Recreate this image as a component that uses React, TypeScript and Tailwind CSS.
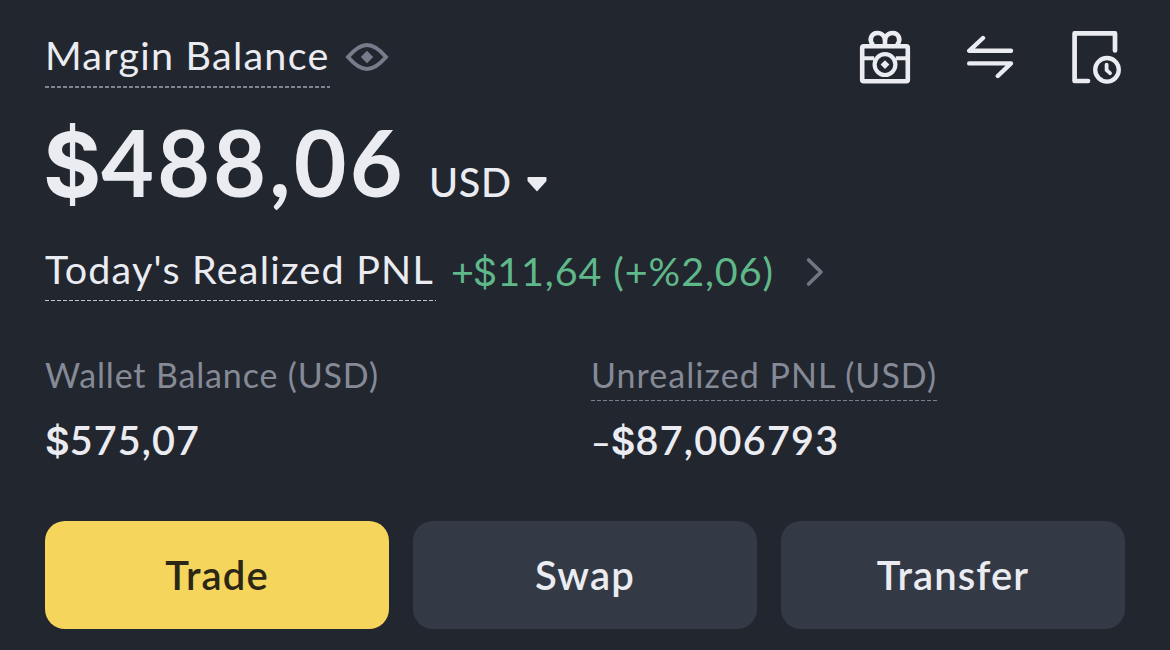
import type { ReactNode } from 'react';

function Dashed({ children, line }: { children: ReactNode; line: string }) {
  return (
    <div className="flex flex-col">
      {children}
      <div className={line} />
    </div>
  );
}

function Dollar({ className = '' }: { className?: string }) {
  return <span className={`font-['Inter',sans-serif] leading-none ${className}`}>$</span>;
}

function EyeIcon() {
  return (
    <svg width="44" height="30" viewBox="0 0 44 30" fill="none" className="text-[#757d8b]">
      <path d="M3 15C9 8 15 3 22 3s13 5 19 12c-6 7-12 12-19 12S9 22 3 15z" stroke="currentColor" strokeWidth="4" />
      <path d="M22 8.8l6.2 6.2-6.2 6.2-6.2-6.2z" fill="currentColor" />
    </svg>
  );
}

function GiftIcon() {
  return (
    <svg width="52" height="56" viewBox="0 0 52 56" fill="none" stroke="currentColor" strokeWidth="4.6">
      <path d="M14 16C9.6 11 12 4 18.4 4c4.6 0 7.6 3.4 7.6 8V16M38 16c4.4-5 2-12-4.4-12-4.6 0-7.6 3.4-7.6 8V16" />
      <rect x="3.2" y="17.2" width="45.6" height="35" rx="1.5" />
      <path d="M3.2 29.2h12M36.8 29.2h12" strokeWidth="4" />
      <circle cx="26" cy="35.6" r="10.4" strokeWidth="4.2" />
      <path d="M26 31.2l4.4 4.4-4.4 4.4-4.4-4.4z" fill="currentColor" stroke="none" />
    </svg>
  );
}

function SwapIcon() {
  return (
    <svg width="48" height="44" viewBox="0 0 48 44" fill="none" stroke="currentColor" strokeWidth="4.4" strokeLinecap="round" strokeLinejoin="round">
      <path d="M17 3L3.2 15.8H45M3.2 28.4H45L31.8 41" />
    </svg>
  );
}

function HistoryIcon() {
  return (
    <svg width="52" height="54" viewBox="0 0 52 54" fill="none" stroke="currentColor" strokeWidth="4.7" strokeLinecap="round" strokeLinejoin="round">
      <path d="M45 20.5V3.4H4.6V51H18" />
      <circle cx="37" cy="39.8" r="11.8" strokeWidth="4.3" />
      <path d="M36.6 34.6v5.6l3.4 3" strokeWidth="3.8" />
    </svg>
  );
}

export default function App() {
  return (
    <main className="h-[650px] w-[1170px] overflow-hidden bg-[#22262f] pl-[45px] pr-[45px] font-['Lato',sans-serif] text-[#ebecf1]">
      {/* Heading and shortcuts */}
      <header className="flex h-[108px] items-start justify-between pt-[29px]">
        <div className="flex">
          <div className="pt-1.5">
            <Dashed line="mt-[11px] h-[2px] w-[285px] bg-[repeating-linear-gradient(90deg,#80848e_0_4px,transparent_4px_6px)]">
              <h1 className="text-[39.5px] leading-10 whitespace-nowrap tracking-[1.25px]">Margin Balance</h1>
            </Dashed>
          </div>
          <div className="ml-[15px] pt-[13px]"><EyeIcon /></div>
        </div>
        <nav className="flex">
          <div className="mr-[55px]"><GiftIcon /></div>
          <div className="mr-[56px] pt-[6px]"><SwapIcon /></div>
          <div className="mr-[3px] pt-px"><HistoryIcon /></div>
        </nav>
      </header>

      {/* Total */}
      <section className="flex h-[130px] items-baseline leading-[108px]">
        <span className="w-[384px] text-[91px] font-bold whitespace-nowrap tracking-[3.2px]">
          <Dollar className="-ml-0.5 text-[89px] font-bold tracking-[0px]" />488,06
        </span>
        <span className="w-[98px] text-[39.5px] font-medium tracking-[0.7px]">USD</span>
        <svg width="20" height="15" viewBox="0 0 20 15" className="relative top-[-5px]" fill="currentColor">
          <path d="M1.5 0h17q1 0 1 1v3L10 14.5.5 4V1q0-1 1-1z" />
        </svg>
      </section>

      {/* Daily result */}
      <section className="flex h-[122px] items-start pt-[11px]">
        <Dashed line="mt-[11px] h-px w-[391px] bg-[repeating-linear-gradient(90deg,#c3c5ca_0_4px,transparent_4px_6px)]">
          <span className="w-[390px] text-[39.5px] leading-10 whitespace-nowrap tracking-[1.2px]">Today's Realized PNL</span>
        </Dashed>
        <span className="ml-[15px] w-[355px] pt-[2px] text-[39.5px] leading-10 whitespace-nowrap tracking-[0.9px] text-[#5fb88a]">
          +<Dollar className="-ml-0.5 text-[38px] tracking-[0px]" />11,64 (+%2,06)
        </span>
        <svg width="18" height="30" viewBox="0 0 18 30" fill="none" stroke="#727683" strokeWidth="3.6" strokeLinecap="round" strokeLinejoin="round" className="mt-2">
          <path d="M2.6 3L15 15 2.6 27" />
        </svg>
      </section>

      {/* Balances */}
      <section className="flex h-[161px]">
        <div className="w-[546px]">
          <div className="h-[59px] text-[34px] leading-[30px] whitespace-nowrap tracking-[0.85px] text-[#858a96]">Wallet Balance (USD)</div>
          <div className="text-[39.5px] leading-[41px] font-semibold tracking-[1.1px]"><Dollar className="text-[38px] tracking-[0px]" />575,07</div>
        </div>
        <div>
          <div className="h-[59px]">
            <Dashed line="mt-[10px] h-px w-[346px] bg-[repeating-linear-gradient(90deg,#7d818c_0_4px,transparent_4px_6px)]">
              <span className="text-[34px] leading-[30px] whitespace-nowrap tracking-[1.05px] text-[#858a96]">Unrealized PNL (USD)</span>
            </Dashed>
          </div>
          <div className="flex items-baseline text-[39.5px] leading-[41px] font-semibold tracking-[1.3px]">
            <span className="text-[34px] tracking-[0px]">–</span>
            <span><Dollar className="text-[38px] tracking-[0px]" />87,006793</span>
          </div>
        </div>
      </section>

      {/* Actions */}
      <section className="grid h-[108px] grid-cols-3 gap-6 text-[40px] font-semibold tracking-[1.1px]">
        <button className="rounded-[20px] bg-[#f5d55b] text-[#2b2716]">Trade</button>
        <button className="rounded-[20px] bg-[#343a45]">Swap</button>
        <button className="rounded-[20px] bg-[#343a45]">Transfer</button>
      </section>
    </main>
  );
}
